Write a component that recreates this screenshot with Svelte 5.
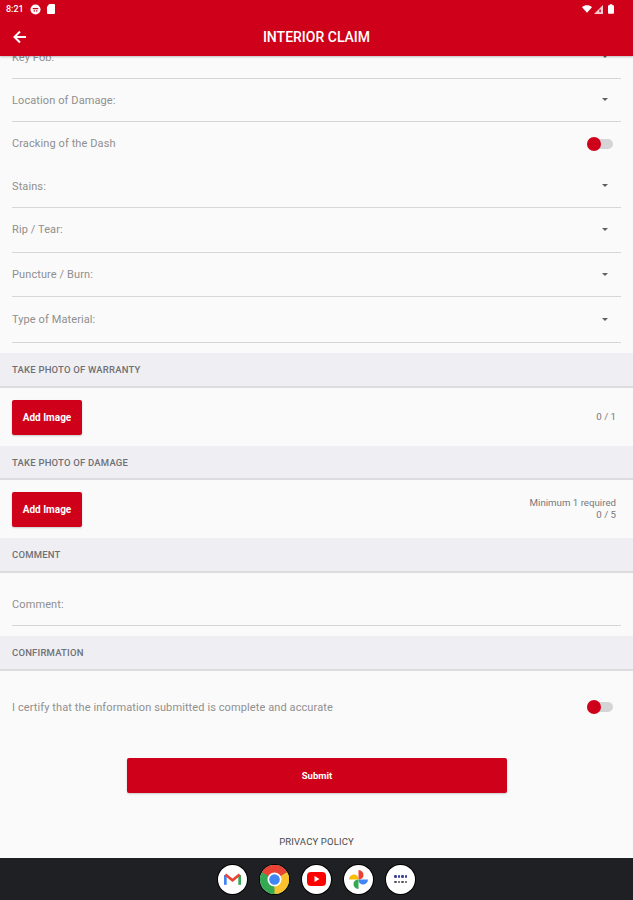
<script>
  const fields = [
    { label: "Key Fob:", h: 62, pad: 13, caret: 20, type: "select" },
    { label: "Location of Damage:", h: 43, pad: 13, caret: 20, type: "select" },
    { label: "Cracking of the Dash", h: 43, pad: 14, type: "toggle" },
    { label: "Stains:", h: 43, pad: 13, caret: 20, type: "select" },
    { label: "Rip / Tear:", h: 45, pad: 15, caret: 21, type: "select" },
    { label: "Puncture / Burn:", h: 44, pad: 14, caret: 20, type: "select" },
    { label: "Type of Material:", h: 46, pad: 15, caret: 21, type: "select" },
  ];
</script>

<div class="screen">
  <header class="appbar">
    <div class="status">
      <div class="status-left">
        <span class="time">8:21</span>
        <svg width="11" height="11" viewBox="0 0 12 12"><circle cx="6" cy="6" r="5.500" fill="#fff" /><path d="M3 5h6M4 7.500h1.500M6.500 7.500H8" stroke="#cf0019" stroke-width="1.300" /></svg>
        <svg width="8" height="10" viewBox="0 0 9 11"><path d="M2.500 0H8a1 1 0 0 1 1 1v9a1 1 0 0 1-1 1H1a1 1 0 0 1-1-1V3z" fill="#fff" /></svg>
      </div>
      <div class="status-right">
        <svg width="10" height="8" viewBox="0 0 13 10"><path d="M0 2.600C3.800-.8 9.200-.8 13 2.600L6.500 10z" fill="#fff" /></svg>
        <svg width="9" height="9" viewBox="0 0 10 10"><path d="M10 0v10H0z" fill="#fff" opacity=".8" /><path d="M6 5h1.500v3H6z" fill="#cf0019" /></svg>
        <svg width="6" height="10" viewBox="0 0 7 11"><path d="M2 0h3v1h1a1 1 0 0 1 1 1v8a1 1 0 0 1-1 1H1a1 1 0 0 1-1-1V2a1 1 0 0 1 1-1h1z" fill="#fff" /></svg>
      </div>
    </div>
    <div class="toolbar">
      <svg class="back" width="14" height="14" viewBox="0 0 14 14"><path d="M13 7H2M7 1.500 1.500 7 7 12.500" fill="none" stroke="#fff" stroke-width="2" /></svg>
      <span class="title">INTERIOR CLAIM</span>
    </div>
  </header>

  <main class="content">
    <div class="scrolled">
      {#each fields as field}
        <div class="field" class:plain={field.type === "toggle"} style="height: {field.h}px">
          <span class="label" style="padding-bottom: {field.pad}px">{field.label}</span>
          {#if field.type === "select"}
            <span class="caret" style="margin-bottom: {field.caret}px"></span>
          {:else}
            <span class="toggle"><span class="knob"></span></span>
          {/if}
        </div>
      {/each}
    </div>

    <section class="section warranty">
      <h2 class="section-title">TAKE PHOTO OF WARRANTY</h2>
      <div class="photo-row">
        <button class="add-btn">Add Image</button>
        <span class="count">0 / 1</span>
      </div>
    </section>

    <section class="section">
      <h2 class="section-title short">TAKE PHOTO OF DAMAGE</h2>
      <div class="photo-row">
        <button class="add-btn">Add Image</button>
        <span class="count">Minimum 1 required<br />0 / 5</span>
      </div>
    </section>

    <section class="section">
      <h2 class="section-title">COMMENT</h2>
      <div class="field comment">
        <span class="label">Comment:</span>
      </div>
    </section>

    <section class="section confirm">
      <h2 class="section-title">CONFIRMATION</h2>
      <div class="certify">
        <span class="label">I certify that the information submitted is complete and accurate</span>
        <span class="toggle"><span class="knob"></span></span>
      </div>
    </section>

    <button class="submit">Submit</button>
    <div class="privacy">PRIVACY POLICY</div>
  </main>

  <nav class="taskbar">
    <span class="app">
      <svg width="17" height="14" viewBox="0 0 19 15">
        <path d="M1.500 14V3" stroke="#4285f4" stroke-width="3" />
        <path d="M17.500 14V3" stroke="#34a853" stroke-width="3" />
        <path d="M1.500 2.500 9.500 9l8-6.500" stroke="#ea4335" stroke-width="3" fill="none" />
      </svg>
    </span>
    <span class="app chrome">
      <svg width="29" height="29" viewBox="0 0 29 29">
        <circle cx="14.500" cy="14.500" r="14.500" fill="#34a853" />
        <path d="M14.500 14.500 1.900 7.200A14.500 14.500 0 0 1 27.100 7.200z" fill="#ea4335" />
        <path d="M14.500 14.500 27.100 7.200A14.500 14.500 0 0 1 14.500 29z" fill="#fbc02d" />
        <circle cx="14.500" cy="14.500" r="7" fill="#fff" />
        <circle cx="14.500" cy="14.500" r="5.300" fill="#4285f4" />
      </svg>
    </span>
    <span class="app">
      <svg width="19" height="14" viewBox="0 0 19 14">
        <rect width="19" height="14" rx="4" fill="#f00" />
        <path d="M7.500 4v6l5-3z" fill="#fff" />
      </svg>
    </span>
    <span class="app">
      <svg width="21" height="21" viewBox="0 0 21 21">
        <path d="M10.500 10.500V1a5 5 0 0 1 4.800 6.500 5 5 0 0 1-4.800 3z" fill="#ea4335" />
        <path d="M10.500 10.500H20a5 5 0 0 1-6.500 4.800 5 5 0 0 1-3-4.800z" fill="#4285f4" />
        <path d="M10.500 10.500V20a5 5 0 0 1-4.800-6.500 5 5 0 0 1 4.800-3z" fill="#34a853" />
        <path d="M10.500 10.500H1a5 5 0 0 1 6.500-4.800 5 5 0 0 1 3 4.800z" fill="#fbbc04" />
      </svg>
    </span>
    <span class="app">
      <span class="dots">
        {#each Array(8) as _, i}
          <i class:top={i < 4}></i>
        {/each}
      </span>
    </span>
  </nav>
</div>

<style>
  :global(body) {
    margin: 0;
    background: #fafafa;
  }

  .screen {
    width: 633px;
    height: 900px;
    display: flex;
    flex-direction: column;
    font-family: Roboto, "Liberation Sans", sans-serif;
    background: #fafafa;
    overflow: hidden;
  }

  .appbar {
    height: 56px;
    flex: none;
    background: #cf0019;
    color: #fff;
    box-shadow: 0 1px 2px rgba(0, 0, 0, 0.25);
    position: relative;
    z-index: 1;
  }

  .status {
    height: 18px;
    padding: 0 19px 0 6px;
    display: flex;
    justify-content: space-between;
    align-items: center;
  }

  .status-left,
  .status-right {
    display: flex;
    align-items: center;
    gap: 6px;
  }

  .status-right {
    gap: 2px;
  }

  .status-right svg:last-child {
    margin-left: 3px;
  }

  .time {
    font-size: 9px;
    font-weight: 500;
  }

  .toolbar {
    height: 38px;
    position: relative;
    display: flex;
    align-items: center;
    justify-content: center;
  }

  .back {
    position: absolute;
    left: 13px;
    top: 12px;
  }

  .title {
    font-size: 14px;
    font-weight: 500;
  }

  .content {
    flex: 1;
    min-height: 0;
    overflow: hidden;
  }

  .scrolled {
    margin-top: -39px;
  }

  .field {
    margin: 0 12px;
    border-bottom: 1px solid #d6d6d6;
    box-sizing: border-box;
    display: flex;
    justify-content: space-between;
    align-items: flex-end;
  }

  .field.plain {
    border-bottom: 0;
  }

  .label {
    font-size: 11px;
    letter-spacing: 0.1px;
    color: #8f8f8f;
    line-height: 14px;
    padding-bottom: 13px;
  }

  .caret {
    width: 0;
    height: 0;
    border: 3px solid transparent;
    border-top: 3px solid #5f5f5f;
    border-bottom: 0;
    margin-right: 13px;
  }

  .toggle {
    width: 26px;
    height: 10px;
    border-radius: 5px;
    background: #d5d5d8;
    position: relative;
    margin: 0 8px 16px 0;
  }

  .knob {
    position: absolute;
    left: 0;
    top: -2px;
    width: 14px;
    height: 14px;
    border-radius: 50%;
    background: #cf0019;
  }

  .section-title {
    margin: 0;
    height: 35px;
    box-sizing: border-box;
    padding-left: 12px;
    display: flex;
    align-items: center;
    font-size: 9.500px;
    font-weight: 500;
    letter-spacing: 0.2px;
    color: #707074;
    background: #efeff3;
    border-bottom: 2px solid #dcdcdf;
  }

  .section-title.short {
    height: 34px;
  }

  .section.warranty {
    margin-top: 10px;
  }

  .photo-row {
    height: 58px;
    padding: 0 17px 0 12px;
    display: flex;
    justify-content: space-between;
    align-items: center;
  }

  .add-btn {
    width: 70px;
    height: 35px;
    padding: 0;
    border: 0;
    border-radius: 2px;
    background: #cf0019;
    color: #fff;
    font-family: inherit;
    font-size: 10px;
    font-weight: 700;
    box-shadow: 0 1px 2px rgba(0, 0, 0, 0.2);
  }

  .count {
    font-size: 9.700px;
    line-height: 12px;
    color: #77777a;
    text-align: right;
  }

  .comment {
    height: 53px;
    margin-bottom: 10px;
  }

  .certify {
    height: 70px;
    padding: 0 12px;
    display: flex;
    justify-content: space-between;
    align-items: flex-end;
  }

  .certify .label {
    padding-bottom: 26px;
  }

  .certify .toggle {
    margin-bottom: 29px;
  }

  .submit {
    display: block;
    width: 380px;
    height: 35px;
    margin: 17px 0 0 127px;
    border: 0;
    border-radius: 2px;
    background: #cf0019;
    color: #fff;
    font-family: inherit;
    font-size: 9.500px;
    font-weight: 700;
    box-shadow: 0 1px 2px rgba(0, 0, 0, 0.2);
  }

  .privacy {
    margin-top: 43px;
    text-align: center;
    font-size: 9.500px;
    line-height: 12px;
    letter-spacing: 0.15px;
    color: #4a4a4a;
  }

  .taskbar {
    height: 42px;
    flex: none;
    background: #1f2024;
    display: flex;
    justify-content: center;
    align-items: center;
    gap: 13px;
  }

  .app {
    width: 29px;
    height: 29px;
    border-radius: 50%;
    background: #fff;
    display: flex;
    align-items: center;
    justify-content: center;
    box-shadow: 0 0 0 1px #000;
  }

  .dots {
    display: grid;
    grid-template-columns: repeat(4, 2.500px);
    gap: 3px 1px;
  }

  .dots i {
    width: 2.500px;
    height: 2.500px;
    border-radius: 50%;
    background: #50525c;
  }

  .dots i.top {
    background: #3a3f9c;
  }
</style>
